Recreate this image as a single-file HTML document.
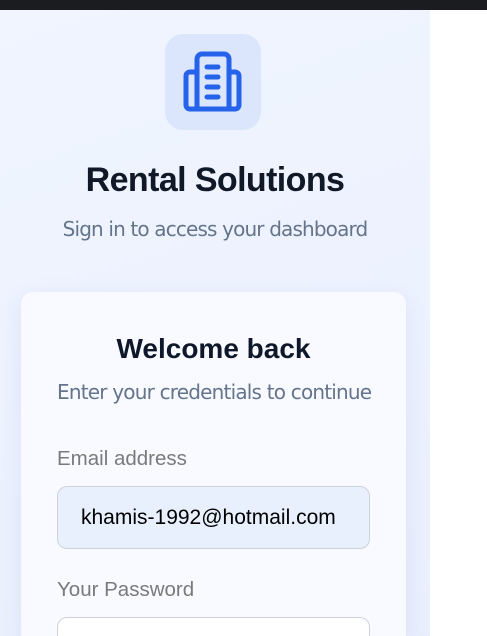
<!DOCTYPE html>
<html><head><style>
html,body{margin:0;padding:0;width:487px;height:636px;overflow:hidden;background:#fff;font-family:"Liberation Sans",sans-serif}
.top{position:absolute;left:0;top:0;width:487px;height:10px;background:#1b1c1f}
.left{position:absolute;left:0;top:10px;width:430px;height:626px;overflow:hidden;background:linear-gradient(160deg,#f0f5ff,#e9effd)}
.logo{position:absolute;left:165px;width:96px;height:96px;border-radius:18px;background:#dbe6fc}
h1{position:absolute;left:0;width:430px;margin:0;text-align:center;font:bold 34px "Liberation Sans",sans-serif;letter-spacing:-0.6px;color:#111827}
.sub{position:absolute;left:0;width:430px;text-align:center;font-size:20px;color:#64748b;font-family:"DejaVu Sans","Liberation Sans",sans-serif;letter-spacing:-0.85px}
.card{position:absolute;left:21px;width:385px;height:344px;border-radius:12px 12px 0 0;background:#f8faff;box-shadow:0 6px 20px rgba(120,140,200,.15)}
h2{position:absolute;left:0;width:385px;top:41px;margin:0;text-align:center;font:bold 28px "Liberation Sans",sans-serif;color:#0f172a}
.s2{position:absolute;left:36px;top:88px;font-size:20px;color:#64748b;font-family:"DejaVu Sans",sans-serif;letter-spacing:-0.8px}
.lbl{position:absolute;left:36px;font-size:20.5px;color:#7a7a7a}
.inp{position:absolute;left:36px;width:313px;height:63px;border:1px solid #cfd2d8;border-radius:10px;box-sizing:border-box}
</style></head><body>
<div class="top"></div>
<div class="left">
<div class="logo" style="top:24px">
<svg width="96" height="96" viewBox="0 0 96 96" fill="none" stroke="#2563eb" stroke-width="5" stroke-linecap="round" stroke-linejoin="round">
<path d="M32 75V25a5 5 0 0 1 5-5h22a5 5 0 0 1 5 5v50z"/>
<path d="M32 38h-7a4 4 0 0 0-4 4v29a4 4 0 0 0 4 4h7"/>
<path d="M64 38h6a4 4 0 0 1 4 4v29a4 4 0 0 1-4 4h-6"/>
<path d="M42 33h11M42 43h11M42 53h11M42 63h11"/>
</svg></div>
<h1 style="top:151px">Rental Solutions</h1>
<div class="sub" style="top:207px">Sign in to access your dashboard</div>
<div class="card" style="top:282px">
<h2>Welcome back</h2>
<div class="s2">Enter your credentials to continue</div>
<div class="lbl" style="top:155px">Email address</div>
<div class="inp" style="top:194px;background:#e8f0fe"><span style="position:absolute;left:23px;top:19px;font-size:21px;color:#000">khamis-1992@hotmail.com</span></div>
<div class="lbl" style="top:286px">Your Password</div>
<div class="inp" style="top:325px;height:19px;border-bottom:none;border-radius:10px 10px 0 0;background:#fff"></div>
</div>
</div>
</body></html>
